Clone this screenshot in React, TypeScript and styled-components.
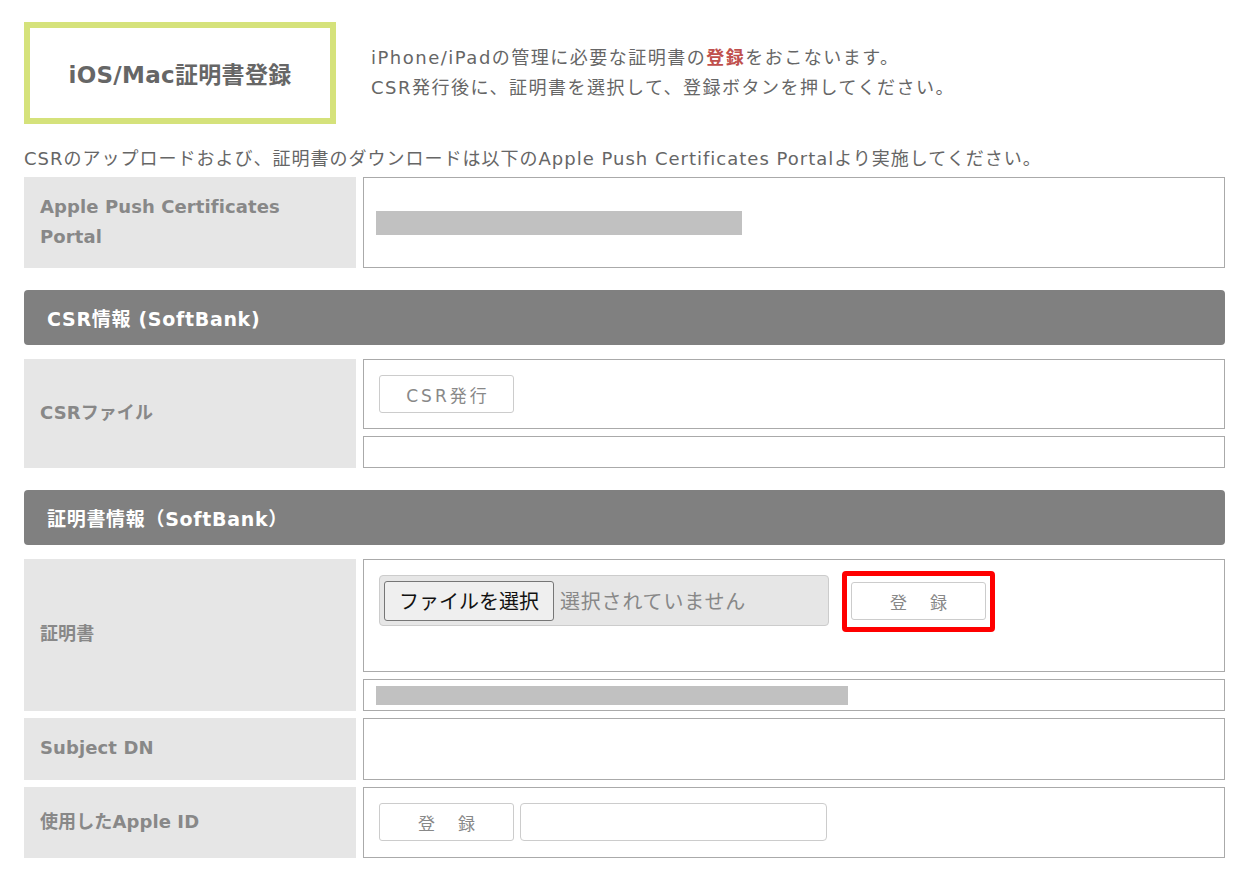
import React from "react";
import styled, { createGlobalStyle } from "styled-components";

const GlobalStyle = createGlobalStyle`
  html, body { margin: 0; padding: 0; background: #fff; }
  body {
    font-family: "DejaVu Sans", "Noto Sans CJK JP", sans-serif;
    color: #666;
  }
  * { box-sizing: border-box; }
`;

const Page = styled.div`
  width: 1251px;
  padding: 22px 26px 12px 24px;
`;

const Intro = styled.div`
  display: flex;
  align-items: center;
  gap: 35px;
`;

const TitleBox = styled.div`
  width: 312px;
  height: 102px;
  border: 6px solid #d5e27b;
  display: flex;
  align-items: center;
  justify-content: center;
  font-size: 23px;
  font-weight: bold;
  color: #666;
  letter-spacing: 0.3px;
`;

const Description = styled.div`
  font-size: 18px;
  line-height: 30px;
  letter-spacing: 1.5px;
  color: #666;
`;

const Strong = styled.span`
  color: #c0504d;
  font-weight: bold;
`;

const Note = styled.p`
  margin: 20px 0 3px;
  font-size: 18px;
  line-height: 30px;
  letter-spacing: 1px;
  color: #666;
  white-space: nowrap;
`;

const Row = styled.div`
  display: grid;
  grid-template-columns: 332px 862px;
  column-gap: 7px;
  margin-bottom: 7px;
`;

const Label = styled.div`
  background: #e6e6e6;
  display: flex;
  align-items: center;
  padding: 0 16px 2px;
  font-size: 18px;
  line-height: 30px;
  font-weight: bold;
  color: #888;
  letter-spacing: 0.1px;
`;

const ValueColumn = styled.div`
  display: flex;
  flex-direction: column;
  gap: 7px;
`;

const Cell = styled.div<{ $h?: number; $pad?: string; $center?: boolean }>`
  border: 1px solid #aaa;
  background: #fff;
  min-height: ${(p) => (p.$h ? `${p.$h}px` : "auto")};
  padding: ${(p) => p.$pad ?? "15px"};
  display: flex;
  align-items: ${(p) => (p.$center ? "center" : "flex-start")};
  gap: 6px;
`;

const Redacted = styled.div<{ $w: number; $h: number }>`
  width: ${(p) => p.$w}px;
  height: ${(p) => p.$h}px;
  background: #c1c1c1;
`;

const SectionHeader = styled.div`
  height: 55px;
  margin: 22px 0 14px;
  background: #808080;
  border-radius: 4px;
  display: flex;
  align-items: center;
  padding-left: 23px;
  color: #fff;
  font-size: 19px;
  font-weight: bold;
  letter-spacing: 0.7px;
`;

const Button = styled.button`
  width: 135px;
  height: 38px;
  border: 1px solid #ccc;
  border-radius: 3px;
  background: #fff;
  color: #888;
  font-family: "DejaVu Sans", "Noto Sans CJK JP", sans-serif;
  font-size: 17px;
  letter-spacing: 3px;
  padding: 0 0 0 3px;
  display: flex;
  align-items: center;
  justify-content: center;
  cursor: pointer;
`;

const FileField = styled.div`
  width: 450px;
  height: 51px;
  background: #e6e6e6;
  border: 1px solid #ccc;
  border-radius: 4px;
  display: flex;
  align-items: center;
  padding-left: 4px;
  gap: 6px;
`;

const FileButton = styled.button`
  height: 40px;
  padding: 0 14px;
  background: #efefef;
  border: 1px solid #767676;
  border-radius: 3px;
  color: #111;
  font-family: "Noto Sans CJK JP", sans-serif;
  font-size: 20px;
`;

const FileStatus = styled.span`
  font-family: "Noto Sans CJK JP", sans-serif;
  font-size: 20px;
  letter-spacing: 0.8px;
  color: #888;
`;

const Highlight = styled.div`
  margin: -4px 0 0 7px;
  border: 5px solid #ff0000;
  border-radius: 4px;
  padding: 6px 4px 7px;
`;

const TextInput = styled.input`
  width: 307px;
  height: 38px;
  border: 1px solid #ccc;
  border-radius: 4px;
  background: #fff;
  padding: 0 8px;
  font-size: 16px;
`;

export default function App() {
  return (
    <>
      <GlobalStyle />
      <Page>
        <Intro>
          <TitleBox>iOS/Mac証明書登録</TitleBox>
          <Description>
            iPhone/iPadの管理に必要な証明書の<Strong>登録</Strong>をおこないます。
            <br />
            CSR発行後に、証明書を選択して、登録ボタンを押してください。
          </Description>
        </Intro>

        <Note>
          CSRのアップロードおよび、証明書のダウンロードは以下のApple Push Certificates Portalより実施してください。
        </Note>

        <Row>
          <Label>
            Apple Push Certificates
            <br />
            Portal
          </Label>
          <Cell $h={91} $pad="0 12px" $center>
            <Redacted $w={366} $h={24} />
          </Cell>
        </Row>

        <SectionHeader>CSR情報 (SoftBank)</SectionHeader>

        <Row>
          <Label>CSRファイル</Label>
          <ValueColumn>
            <Cell>
              <Button>CSR発行</Button>
            </Cell>
            <Cell $h={32} $pad="0" />
          </ValueColumn>
        </Row>

        <SectionHeader>証明書情報（SoftBank）</SectionHeader>

        <Row>
          <Label>証明書</Label>
          <ValueColumn>
            <Cell $h={113} $pad="15px 15px 0">
              <FileField>
                <FileButton>ファイルを選択</FileButton>
                <FileStatus>選択されていません</FileStatus>
              </FileField>
              <Highlight>
                <Button>登　録</Button>
              </Highlight>
            </Cell>
            <Cell $h={32} $pad="6px 12px 5px">
              <Redacted $w={472} $h={19} />
            </Cell>
          </ValueColumn>
        </Row>

        <Row>
          <Label>Subject DN</Label>
          <Cell $h={62} $pad="0" />
        </Row>

        <Row>
          <Label>使用したApple ID</Label>
          <Cell $h={71} $pad="15px 15px 16px">
            <Button>登　録</Button>
            <TextInput />
          </Cell>
        </Row>
      </Page>
    </>
  );
}
